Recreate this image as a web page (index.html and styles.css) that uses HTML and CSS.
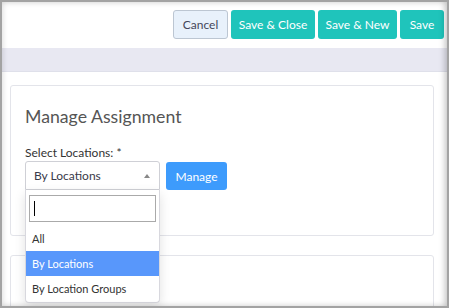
FILE: index.html
```html
<!DOCTYPE html>
<html>
<head>
<meta charset="utf-8">
<link rel="stylesheet" href="styles.css">
</head>
<body>
<div class="frame">
  <div class="toolbar">
    <button class="btn btn-cancel">Cancel</button>
    <button class="btn btn-teal">Save &amp; Close</button>
    <button class="btn btn-teal">Save &amp; New</button>
    <button class="btn btn-teal">Save</button>
  </div>
  <div class="band"></div>
  <div class="content">
    <div class="card card-main">
      <h2 class="title">Manage Assignment</h2>
      <div class="label">Select Locations: *</div>
      <div class="row">
        <div class="select-wrap">
          <div class="select">
            <span class="select-text">By Locations</span>
            <span class="arrow"></span>
          </div>
          <div class="dropdown">
            <div class="search"><span class="caret"></span></div>
            <ul class="options">
              <li class="opt">All</li>
              <li class="opt active">By Locations</li>
              <li class="opt">By Location Groups</li>
            </ul>
          </div>
        </div>
        <button class="btn btn-blue">Manage</button>
      </div>
    </div>
    <div class="card card-second"></div>
  </div>
</div>
</body>
</html>
```
FILE: styles.css
```css
* { box-sizing: border-box; }
html, body { margin: 0; padding: 0; }
body {
  width: 449px;
  height: 308px;
  overflow: hidden;
  font-family: "Lato", "Liberation Sans", sans-serif;
  color: #333;
}
.frame {
  width: 449px;
  height: 308px;
  border: 2px solid #a3a3a3;
  background: #fff;
  position: relative;
  overflow: hidden;
}
.frame::after {
  content: "";
  position: absolute;
  inset: 0;
  pointer-events: none;
  box-shadow: inset 0 0 6px rgba(0,0,0,0.18), inset -6px 0 6px -3px rgba(0,0,0,0.12);
  z-index: 5;
}
.toolbar {
  height: 46px;
  display: flex;
  justify-content: flex-end;
  align-items: flex-start;
  gap: 3px;
  padding: 8px 3px 0 0;
}
.btn {
  font-family: inherit;
  font-size: 12px;
  height: 29px;
  border-radius: 3px;
  border: 1px solid transparent;
  padding: 0;
  white-space: nowrap;
  cursor: pointer;
}
.btn-cancel {
  background: #e8f1fb;
  border-color: #bcc6d2;
  color: #44465a;
  width: 55px;
}
.btn-teal {
  background: #1fc4bb;
  color: #fff;
}
.btn-teal:nth-child(2) { width: 84px; }
.btn-teal:nth-child(3) { width: 79px; }
.btn-teal:nth-child(4) { width: 44px; }
.band {
  height: 24px;
  background: #e8e8f2;
  border-bottom: 1px solid #dfe0ea;
}
.content {
  padding: 13px 13px 0 8px;
  display: flex;
  flex-direction: column;
  gap: 19px;
}
.card {
  border: 1px solid #e3e4ea;
  border-radius: 3px;
  background: #fff;
}
.card-main {
  height: 151px;
  padding: 19px 14px 0 14px;
}
.card-second {
  height: 60px;
}
.title {
  margin: 0;
  font-weight: normal;
  font-size: 17.7px;
  line-height: 24px;
  color: #555;
}
.label {
  margin-top: 16px;
  font-size: 12px;
  line-height: 16px;
  color: #333;
}
.row {
  display: flex;
  gap: 6px;
  align-items: flex-start;
}
.select-wrap {
  position: relative;
  width: 135px;
}
.select {
  height: 29px;
  border: 1px solid #cfd0d6;
  border-radius: 3px 3px 0 0;
  display: flex;
  align-items: center;
  padding: 0 8px;
  background: #fff;
}
.select-text {
  flex: 1;
  font-size: 12px;
  color: #3a3a4a;
}
.arrow {
  width: 0;
  height: 0;
  border-left: 3px solid transparent;
  border-right: 3px solid transparent;
  border-bottom: 4px solid #888;
  margin-right: 1px;
}
.dropdown {
  position: absolute;
  top: 29px;
  left: 0;
  width: 135px;
  background: #fff;
  border: 1px solid #d8d8de;
  border-top: none;
  border-radius: 0 0 4px 4px;
  box-shadow: 0 4px 12px rgba(0,0,0,0.12);
  z-index: 3;
}
.search {
  margin: 5px 3px 0 3px;
  height: 27px;
  border: 1px solid #aaa;
  display: flex;
  align-items: center;
  padding-left: 4px;
}
.caret {
  width: 1px;
  height: 15px;
  background: #000;
}
.options {
  list-style: none;
  margin: 4px 0 0 0;
  padding: 0 0 1px 0;
}
.opt {
  height: 25px;
  line-height: 25px;
  font-size: 11px;
  padding-left: 6px;
  color: #333;
}
.opt.active {
  background: #5897fb;
  color: #fff;
}
.btn-blue {
  background: #3d9bfc;
  color: #fff;
  height: 28px;
  margin-top: 1px;
  width: 61px;
}
```
